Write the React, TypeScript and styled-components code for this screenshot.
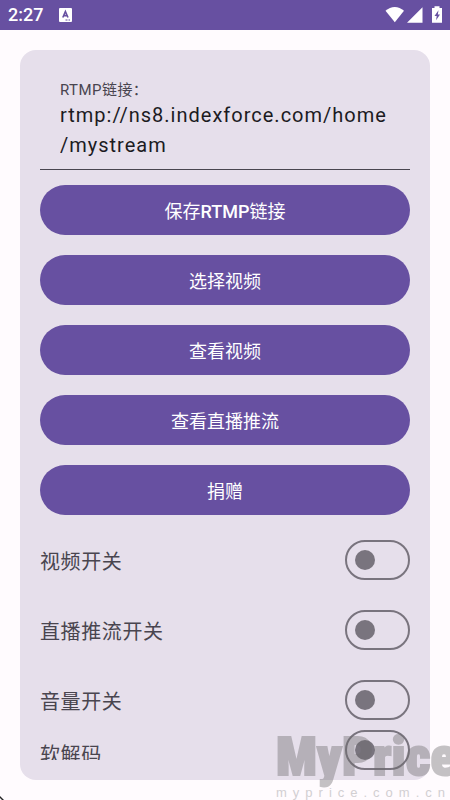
import React, { useId, useState } from "react";
import styled, { createGlobalStyle } from "styled-components";

const color = {
  primary: "#6750a1",
  surface: "#fffbfe",
  card: "#e6dfeb",
  ink: "#1c1b1f",
  muted: "#49454f",
  outline: "#79747e",
};

const GlobalStyle = createGlobalStyle`
  * { box-sizing: border-box; }
  body {
    margin: 0;
    background: ${color.surface};
    font-family: Roboto, "Noto Sans CJK SC", sans-serif;
  }
`;

const Screen = styled.div`
  position: relative;
  display: flex;
  flex-direction: column;
  min-height: 100vh;
  overflow: hidden;
`;

const StatusBar = styled.header`
  display: flex;
  align-items: center;
  height: 30px;
  padding: 0 8px;
  background: ${color.primary};
  color: #fff;
`;

const Clock = styled.time`
  font-size: 18px;
  line-height: 30px;
  font-weight: 500;
  margin-right: 16px;
`;

const StatusIcons = styled.div`
  display: flex;
  align-items: center;
  margin-left: auto;
`;

const Content = styled.main`
  flex: 1;
  display: flex;
  flex-direction: column;
  padding: 20px;
`;

const Card = styled.form`
  flex: 1;
  display: flex;
  flex-direction: column;
  padding: 20px;
  border-radius: 16px;
  background: ${color.card};
`;

const Field = styled.div`
  display: flex;
  flex-direction: column;
  height: 100px;
  padding: 10px 20px 0;
  border-bottom: 1px solid ${color.muted};
`;

const FieldLabel = styled.label`
  font-size: 15px;
  line-height: 20px;
  letter-spacing: 0.03em;
  color: ${color.muted};
`;

const FieldInput = styled.textarea`
  display: block;
  width: 100%;
  height: 60px;
  padding: 0;
  border: 0;
  outline: 0;
  resize: none;
  overflow: hidden;
  background: transparent;
  color: ${color.ink};
  font: inherit;
  font-size: 20px;
  line-height: 30px;
  letter-spacing: 1px;
`;

const Actions = styled.div`
  display: flex;
  flex-direction: column;
  gap: 20px;
  padding: 15px 0 20px;
`;

const ActionButton = styled.button`
  height: 50px;
  padding: 4px 20px 0;
  border: 0;
  border-radius: 25px;
  background: ${color.primary};
  color: #fff;
  font: inherit;
  font-size: 18px;
  line-height: 24px;
  cursor: pointer;
`;

const Latin = styled.span`
  font-weight: 500;
`;

const Settings = styled.div`
  display: flex;
  flex-direction: column;
`;

const SettingRow = styled.div<{ $short?: boolean }>`
  display: flex;
  align-items: center;
  justify-content: space-between;
  height: ${(p) => (p.$short ? "20px" : "50px")};
  margin-bottom: ${(p) => (p.$short ? "0" : "20px")};

  &:nth-last-child(2) {
    margin-bottom: 15px;
  }
`;

const SettingLabel = styled.label<{ $short?: boolean }>`
  max-height: 100%;
  padding-top: ${(p) => (p.$short ? "0" : "4px")};
  overflow: hidden;
  font-size: 20px;
  line-height: 30px;
  letter-spacing: 0.03em;
  color: ${color.muted};
`;

const Toggle = styled.input`
  appearance: none;
  flex: none;
  display: flex;
  align-items: center;
  width: 65px;
  height: 40px;
  margin: 0;
  padding: 0 8px;
  border: 2px solid ${color.outline};
  border-radius: 20px;
  cursor: pointer;

  &::before {
    content: "";
    width: 20px;
    height: 20px;
    border-radius: 50%;
    background: ${color.outline};
  }

  &:checked {
    justify-content: flex-end;
    background: ${color.primary};
  }

  &:checked::before {
    background: #fff;
  }
`;

const Watermark = styled.div`
  position: absolute;
  right: 0;
  bottom: 0;
  display: flex;
  flex-direction: column;
  width: 174px;
  pointer-events: none;
  white-space: nowrap;
`;

const WatermarkName = styled.span`
  font-family: "Liberation Sans Narrow", "Roboto Condensed", Roboto, sans-serif;
  font-size: 54px;
  font-weight: 900;
  line-height: 56px;
  color: #6e6c6e;
  -webkit-text-stroke: 2px #6e6c6e;
  opacity: 0.4;
`;

const WatermarkSite = styled.span`
  font-family: "Liberation Sans", sans-serif;
  font-size: 13px;
  line-height: 15px;
  letter-spacing: 6px;
  color: #d2cfd2;
`;

const CornerMark = styled.svg`
  position: absolute;
  left: 0;
  bottom: 0;
`;

function KeyboardIcon() {
  return (
    <svg width="13" height="14" viewBox="0 0 13 14" aria-hidden="true">
      <rect width="13" height="14" rx="1" fill="#fff" />
      <path d="M3.800 9.500 6.400 3.500 9 9.500M4.700 7.600h3.400" fill="none" stroke={color.primary} strokeWidth="1.6" />
      <path d="M6.500 12h2M9.500 12h1.500" stroke={color.primary} strokeWidth="1" />
    </svg>
  );
}

function SignalIcons() {
  return (
    <svg width="57" height="18" viewBox="0 0 57 18" fill="#fff" aria-hidden="true">
      <path d="M0.500 4.800C6 -0.400 13.500 -0.400 19 4.800L9.800 16.200Z" />
      <path d="M22 16.800 37.500 1.200V16.800Z" />
      <path d="M49.500 0.200h5v1.800h2.500v14.800h-10V2h2.500Z" />
      <path d="M53.500 4.200 49.500 10h2.200l-.6 4.300L55 8.500h-2.200Z" fill={color.primary} />
    </svg>
  );
}

const actions: { id: string; text: React.ReactNode }[] = [
  { id: "save", text: <>保存<Latin>RTMP</Latin>链接</> },
  { id: "pick", text: "选择视频" },
  { id: "view", text: "查看视频" },
  { id: "live", text: "查看直播推流" },
  { id: "donate", text: "捐赠" },
];
const settings = ["视频开关", "直播推流开关", "音量开关", "软解码"];

function Setting({ label, short }: { label: string; short?: boolean }) {
  const id = useId();
  const [on, setOn] = useState(false);
  return (
    <SettingRow $short={short}>
      <SettingLabel htmlFor={id} $short={short}>{label}</SettingLabel>
      <Toggle id={id} type="checkbox" role="switch" checked={on} onChange={(e) => setOn(e.target.checked)} />
    </SettingRow>
  );
}

export default function App() {
  const [url, setUrl] = useState("rtmp://ns8.indexforce.com/home\n/mystream");
  return (
    <Screen>
      <GlobalStyle />
      <StatusBar>
        <Clock>2:27</Clock>
        <KeyboardIcon />
        <StatusIcons>
          <SignalIcons />
        </StatusIcons>
      </StatusBar>
      <Content>
        <Card onSubmit={(e) => e.preventDefault()}>
          <Field>
            <FieldLabel htmlFor="rtmp-url">RTMP链接：</FieldLabel>
            <FieldInput id="rtmp-url" spellCheck={false} value={url} onChange={(e) => setUrl(e.target.value)} />
          </Field>
          <Actions>
            {actions.map((action) => (
              <ActionButton key={action.id} type="button">
                {action.text}
              </ActionButton>
            ))}
          </Actions>
          <Settings>
            {settings.map((text, i) => (
              <Setting key={text} label={text} short={i === settings.length - 1} />
            ))}
          </Settings>
        </Card>
      </Content>
      <Watermark>
        <WatermarkName>MyPrice</WatermarkName>
        <WatermarkSite>myprice.com.cn</WatermarkSite>
      </Watermark>
      <CornerMark width="5" height="5" viewBox="0 0 5 5" aria-hidden="true">
        <path d="M0 1 4 5H2L0 3Z" fill="#222" />
      </CornerMark>
    </Screen>
  );
}
